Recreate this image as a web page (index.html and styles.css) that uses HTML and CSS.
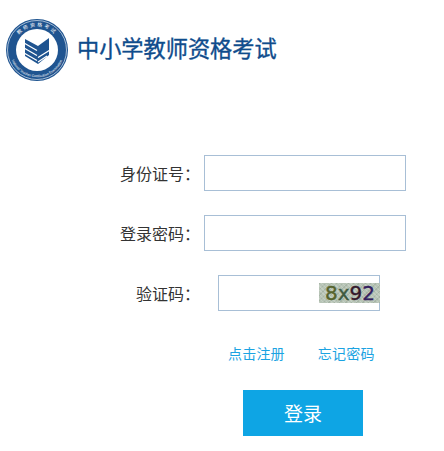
FILE: index.html
```html
<!DOCTYPE html>
<html lang="zh-CN">
<head>
    <meta charset="UTF-8">
    <meta name="viewport" content="width=device-width, initial-scale=1.0">
    <title>中小学教师资格考试</title>
    <link rel="stylesheet" href="styles.css">
</head>
<body>
    <header class="header">
        <svg class="logo" width="64" height="64" viewBox="0 0 64 64">
            <defs>
                <path id="ringTop" d="M8.500 32a23.500 23.500 0 0 1 47 0"/>
                <path id="ringBottom" d="M5 36a27.300 27.300 0 0 0 54 0"/>
            </defs>
            <circle cx="32" cy="32" r="31" fill="#1f5490"/>
            <circle cx="32" cy="32" r="29.500" fill="none" stroke="#dfe8f2" stroke-width="0.7"/>
            <circle cx="32" cy="32" r="21" fill="#fff"/>
            <text class="logo-cn"><textPath href="#ringTop" startOffset="50%" text-anchor="middle">教师资格考试</textPath></text>
            <text class="logo-en"><textPath href="#ringBottom" startOffset="50%" text-anchor="middle">National Teacher Certification Examination</textPath></text>
            <path d="M20 21l13 7 11-8v17l-11 9-13-8z" fill="#1f5490"/>
            <path d="M19 25l13 7.500M19 30l13 7.500M19 35l13 7.500M33 39.500l12-7.500M33 44l9-6" stroke="#fff" stroke-width="1.300" fill="none"/>
        </svg>
        <h1 class="site-title">中小学教师资格考试</h1>
    </header>

    <form class="login-form">
        <div class="form-row">
            <label class="form-label">身份证号：</label>
            <input class="form-input" type="text">
        </div>
        <div class="form-row">
            <label class="form-label">登录密码：</label>
            <input class="form-input" type="password">
        </div>
        <div class="form-row">
            <label class="form-label">验证码：</label>
            <div class="captcha-box">
                <input class="form-input captcha-input" type="text">
                <span class="captcha"><b class="c1">8</b><b class="c2">x</b><b class="c3">9</b><b class="c4">2</b></span>
            </div>
        </div>
        <div class="form-links">
            <a href="#" class="form-link">点击注册</a>
            <a href="#" class="form-link">忘记密码</a>
        </div>
        <button type="button" class="submit-button">登录</button>
    </form>
</body>
</html>
```

FILE: styles.css
```css
* {
    margin: 0;
    padding: 0;
    box-sizing: border-box;
    font-family: "Liberation Sans", "Noto Sans CJK SC", sans-serif;
}

body {
    background-color: #fff;
    color: #333;
}

.header {
    display: flex;
    align-items: center;
    gap: 8px;
    padding: 18px 0 0 5px;
}

.logo {
    display: block;
}

.logo-cn {
    font-size: 5px;
    fill: #fff;
    letter-spacing: 1.800px;
}

.logo-en {
    font-size: 3.400px;
    fill: #fff;
}

.site-title {
    font-size: 22.200px;
    font-weight: 400;
    color: #0f4c8c;
    -webkit-text-stroke: 0.35px #0f4c8c;
    position: relative;
    top: -3px;
}

.login-form {
    display: flex;
    flex-direction: column;
    padding-top: 73px;
}

.form-row {
    display: flex;
    align-items: center;
    margin-bottom: 24px;
}

.form-label {
    width: 200px;
    margin-right: 4px;
    font-size: 16px;
    text-align: right;
    color: #333;
}

.form-input {
    width: 202px;
    height: 36px;
    padding: 0 8px;
    border: 1px solid #a8bfd6;
    background: #fff;
    outline: none;
}

.captcha-box {
    position: relative;
    margin-left: 14px;
}

.captcha-input {
    width: 162px;
}

.captcha {
    position: absolute;
    top: 8px;
    right: 0;
    width: 61px;
    height: 20px;
    display: flex;
    align-items: center;
    padding-left: 6px;
    background-color: #b7c4b6;
    background-image: repeating-linear-gradient(45deg, rgba(255, 255, 255, 0.18) 0 1px, transparent 1px 3px), repeating-linear-gradient(-45deg, rgba(70, 90, 70, 0.14) 0 1px, transparent 1px 4px);
    font-size: 20px;
    line-height: 20px;
}

.captcha b {
    font-family: "DejaVu Sans", sans-serif;
    font-weight: 400;
    -webkit-text-stroke: 0.4px currentColor;
}

.captcha .c1 {
    color: #56632c;
}

.captcha .c2 {
    color: #3f5a40;
}

.captcha .c3 {
    color: #33182c;
}

.captcha .c4 {
    color: #33205e;
}

.form-links {
    display: flex;
    gap: 33px;
    padding: 9px 0 0 228px;
}

.form-link {
    font-size: 14px;
    line-height: 20px;
    letter-spacing: 0.2px;
    color: #1ba3e2;
    text-decoration: none;
}

.submit-button {
    width: 120px;
    height: 46px;
    margin: 26px 0 0 243px;
    padding-bottom: 2px;
    background-color: #0ea5e4;
    color: #fff;
    border: none;
    font-size: 19px;
    cursor: pointer;
}
```
